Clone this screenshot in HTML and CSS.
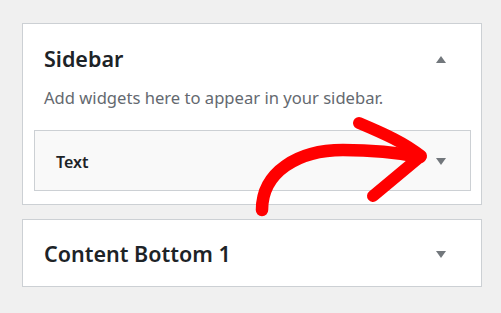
FILE: index.html
```html
<!DOCTYPE html>
<html>
<head>
<meta charset="utf-8">
<link rel="stylesheet" href="styles.css">
</head>
<body>
<div class="page">
  <section class="card sidebar">
    <div class="card-head">
      <h2 class="title">Sidebar</h2>
      <span class="tri up"></span>
    </div>
    <p class="desc">Add widgets here to appear in your sidebar.</p>
    <div class="widget">
      <h3 class="widget-title">Text</h3>
      <span class="tri down"></span>
    </div>
  </section>
  <section class="card closed">
    <h2 class="title">Content Bottom 1</h2>
    <span class="tri down"></span>
  </section>
  <svg class="arrow" width="501" height="313" viewBox="0 0 501 313">
    <path d="M262 210 C 262 172, 298 150, 343 150 C 375 150, 400 153, 420 157" fill="none" stroke="#ff0000" stroke-width="12.5" stroke-linecap="round"/>
    <path d="M359 123 C 385 134, 405 143, 421 156 L 373 196" fill="none" stroke="#ff0000" stroke-width="12" stroke-linecap="round" stroke-linejoin="round"/>
  </svg>
</div>
</body>
</html>
```

FILE: styles.css
```css
* {
  box-sizing: border-box;
}
html, body {
  margin: 0;
  padding: 0;
  background: #f0f0f0;
}
body {
  font-family: "Noto Sans", "Open Sans", sans-serif;
  width: 501px;
  height: 313px;
  overflow: hidden;
}
.page {
  position: relative;
  padding: 23px 19px 0 22px;
  display: flex;
  flex-direction: column;
  gap: 14px;
}
.card {
  background: #fff;
  border: 1px solid #ccd0d4;
  width: 460px;
}
.sidebar {
  padding: 23px 10px 13px 11px;
}
.card-head {
  display: flex;
  align-items: center;
  justify-content: space-between;
  padding: 0 25px 0 10px;
  height: 24px;
}
.title {
  margin: 0;
  font-size: 21.5px;
  font-weight: 600;
  color: #1d2327;
  line-height: 24px;
}
.desc {
  margin: 17px 0 22px 10px;
  font-size: 16.6px;
  line-height: 20px;
  color: #646970;
  white-space: nowrap;
}
.widget {
  background: #f9f9f9;
  border: 1px solid #ccd0d4;
  display: flex;
  align-items: center;
  justify-content: space-between;
  padding: 2px 24px 0 21px;
  height: 61px;
}
.widget-title {
  margin: 0;
  font-size: 16px;
  font-weight: 600;
  color: #1d2327;
}
.closed {
  display: flex;
  align-items: center;
  justify-content: space-between;
  padding: 2px 35px 0 21px;
  height: 68px;
}
.tri {
  width: 0;
  height: 0;
  border-left: 5px solid transparent;
  border-right: 5px solid transparent;
}
.tri.up {
  border-bottom: 7px solid #72777c;
}
.tri.down {
  border-top: 7px solid #72777c;
}
.arrow {
  position: absolute;
  left: 0;
  top: 0;
}
```
